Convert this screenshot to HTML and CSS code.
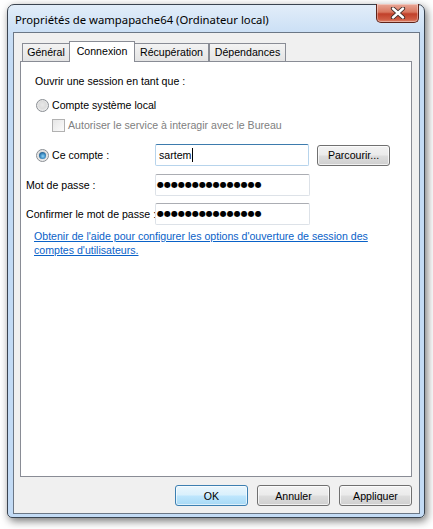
FILE: index.html
```html
<!DOCTYPE html>
<html lang="fr">
<head>
    <meta charset="UTF-8">
    <title>Propriétés de wampapache64 (Ordinateur local)</title>
    <link rel="stylesheet" href="styles.css">
</head>
<body>
    <div class="window">
        <div class="titlebar">
            <span class="title">Propriétés de wampapache64 (Ordinateur local)</span>
            <button class="close-btn" aria-label="Fermer">
                <svg width="16" height="12" viewBox="0 0 16 12">
                    <path d="M3 1.5 L13 10.5 M13 1.5 L3 10.5" stroke="#3a2a28" stroke-width="4.2" stroke-linecap="round"/>
                    <path d="M3 1.5 L13 10.5 M13 1.5 L3 10.5" stroke="#ffffff" stroke-width="2.4" stroke-linecap="round"/>
                </svg>
            </button>
        </div>
        <div class="client">
            <div class="tabs">
                <div class="tab tab-general">Général</div>
                <div class="tab tab-active">Connexion</div>
                <div class="tab tab-recup">Récupération</div>
                <div class="tab tab-dep">Dépendances</div>
            </div>
            <div class="panel">
                <div class="heading">Ouvrir une session en tant que :</div>

                <div class="option-row radio-local">
                    <span class="radio"></span>
                    <span>Compte système local</span>
                </div>
                <div class="option-row check-row">
                    <span class="checkbox"></span>
                    <span class="disabled">Autoriser le service à interagir avec le Bureau</span>
                </div>

                <div class="field-row account-row">
                    <div class="field-label option-row">
                        <span class="radio checked"></span>
                        <span>Ce compte :</span>
                    </div>
                    <div class="textbox focused">sartem<span class="caret"></span></div>
                    <button class="btn browse-btn">Parcourir...</button>
                </div>
                <div class="field-row pw-row">
                    <div class="field-label">Mot de passe :</div>
                    <div class="textbox"><span class="dots">●●●●●●●●●●●●●●●</span></div>
                </div>
                <div class="field-row pw-row2">
                    <div class="field-label">Confirmer le mot de passe :</div>
                    <div class="textbox"><span class="dots">●●●●●●●●●●●●●●●</span></div>
                </div>

                <a class="help-link" href="#">Obtenir de l'aide pour configurer les options d'ouverture de session des<br>comptes d'utilisateurs.</a>
            </div>
            <div class="actions">
                <button class="btn btn-default">OK</button>
                <button class="btn">Annuler</button>
                <button class="btn">Appliquer</button>
            </div>
        </div>
    </div>
</body>
</html>
```

FILE: styles.css
```css
:root {
    --frame: #c3dbf5;
    --face: #f0f0f0;
    --panel-border: #898c95;
    --text: #000000;
    --link: #0a62c8;
}
html, body {
    margin: 0;
    padding: 0;
    background: #ffffff;
}
body {
    width: 433px;
    height: 529px;
    overflow: hidden;
    font-family: "Liberation Sans", Arial, sans-serif;
    font-size: 10.6px;
    color: var(--text);
}
.window {
    margin: 4px 0 0 7px;
    width: 418px;
    height: 514px;
    box-sizing: border-box;
    border: 1px solid #3a4450;
    border-radius: 7px 7px 5px 5px;
    background: linear-gradient(to bottom, #e2edf9 0px, #c9def5 30px, var(--frame) 60px);
    padding: 0 4px 3px 5px;
    box-shadow: 2px 3px 8px rgba(0, 0, 0, 0.55);
    display: flex;
    flex-direction: column;
}
.titlebar {
    flex: none;
    height: 27px;
    display: flex;
    justify-content: space-between;
    align-items: flex-start;
}
.title {
    font-family: "Noto Sans", "Open Sans", sans-serif;
    font-size: 11.3px;
    line-height: 16px;
    margin: 7px 0 0 2px;
    color: #000;
}
.close-btn {
    margin: -1px 1px 0 0;
    width: 43px;
    height: 19px;
    padding: 0;
    border: 1px solid #5e231a;
    border-top: none;
    border-radius: 0 0 5px 5px;
    background: linear-gradient(to bottom, #e9a898 0%, #d9775f 45%, #c1402a 55%, #cf5c43 85%, #e0876e 100%);
    box-shadow: inset 0 0 0 1px rgba(255, 255, 255, 0.35);
    display: flex;
    align-items: center;
    justify-content: center;
}
.client {
    flex: 1;
    min-height: 0;
    border: 1px solid #6b7786;
    background: var(--face);
    padding: 8px 7px 8px 6px;
    display: flex;
    flex-direction: column;
}
.tabs {
    flex: none;
    display: flex;
    align-items: flex-end;
    height: 20px;
    padding-left: 2px;
}
.tab {
    height: 17px;
    border: 1px solid var(--panel-border);
    border-bottom: none;
    background: linear-gradient(to bottom, #f3f3f3, #e4e4e4);
    line-height: 17px;
    text-align: center;
    margin-left: -1px;
}
.tab-general { width: 46px; margin-left: 0; }
.tab-active {
    width: 64px;
    height: 20px;
    line-height: 18px;
    background: #ffffff;
    margin-bottom: -1px;
    position: relative;
    z-index: 1;
}
.tab-recup { width: 73px; }
.tab-dep { width: 75px; margin-left: 0; }
.panel {
    flex: none;
    height: 416px;
    box-sizing: border-box;
    border: 1px solid var(--panel-border);
    background: #ffffff;
    padding: 12px 0 0 5px;
}
.heading {
    margin-left: 9px;
    line-height: 14px;
}
.option-row {
    display: flex;
    align-items: center;
    gap: 3px;
    line-height: 14px;
    white-space: nowrap;
}
.radio-local {
    margin: 10px 0 0 10px;
}
.check-row {
    margin: 6px 0 0 26px;
}
.radio {
    width: 11px;
    height: 11px;
    border-radius: 50%;
    border: 1px solid #8a8e93;
    background: radial-gradient(circle at 50% 45%, #e8e8e8 0%, #dcdcdc 45%, #f4f4f4 80%);
    position: relative;
    flex: none;
}
.radio.checked::after {
    content: "";
    position: absolute;
    left: 2px;
    top: 2px;
    width: 7px;
    height: 7px;
    border-radius: 50%;
    background: radial-gradient(circle at 55% 60%, #8fd4f6 0%, #3b8ac2 45%, #123c60 95%);
}
.checkbox {
    width: 11px;
    height: 11px;
    border: 1px solid #b1b1b1;
    background: linear-gradient(135deg, #e6e6e6, #fbfbfb);
    flex: none;
}
.disabled {
    color: #808080;
}
.field-row {
    display: flex;
    align-items: center;
    height: 22px;
}
.account-row { margin-top: 12px; }
.pw-row { margin-top: 8px; }
.pw-row2 { margin-top: 7px; }
.field-label {
    width: 129px;
    flex: none;
    white-space: nowrap;
}
.account-row .field-label {
    width: 119px;
    margin-left: 10px;
}
.textbox {
    width: 155px;
    height: 22px;
    box-sizing: border-box;
    border: 1px solid #dde2e8;
    border-top-color: #abadb3;
    border-radius: 2px;
    background: #ffffff;
    padding-left: 3px;
    display: flex;
    align-items: center;
    line-height: 14px;
}
.textbox.focused {
    border-color: #b7d4ec;
    border-top-color: #3d7bad;
    width: 154px;
}
.caret {
    width: 1px;
    height: 14px;
    background: #000;
    margin-left: 1px;
}
.dots {
    font-family: "DejaVu Sans", sans-serif;
    font-size: 8px;
    letter-spacing: 0px;
    margin-left: -2px;
    color: #000;
}
.btn {
    height: 21px;
    box-sizing: border-box;
    border: 1px solid #707070;
    border-radius: 3px;
    background: linear-gradient(to bottom, #f2f2f2 0%, #ebebeb 48%, #dddddd 52%, #cfcfcf 100%);
    box-shadow: inset 0 0 0 1px rgba(255, 255, 255, 0.7);
    font-family: "Liberation Sans", Arial, sans-serif;
    font-size: 10.6px;
    color: #000;
    padding: 0;
}
.browse-btn {
    width: 73px;
    height: 21px;
    margin-left: 8px;
}
.help-link {
    display: block;
    margin: 4px 0 0 8px;
    color: var(--link);
    line-height: 14px;
    text-decoration: underline;
}
.actions {
    flex: none;
    display: flex;
    justify-content: flex-end;
    gap: 9px;
    margin-top: 8px;
}
.actions .btn {
    width: 73px;
}
.btn-default {
    border-color: #3c7fb1;
    background: linear-gradient(to bottom, #eaf6fd 0%, #d9f0fc 48%, #bee6fd 52%, #a7d9f5 100%);
    box-shadow: inset 0 0 0 1px rgba(255, 255, 255, 0.6);
}
```
